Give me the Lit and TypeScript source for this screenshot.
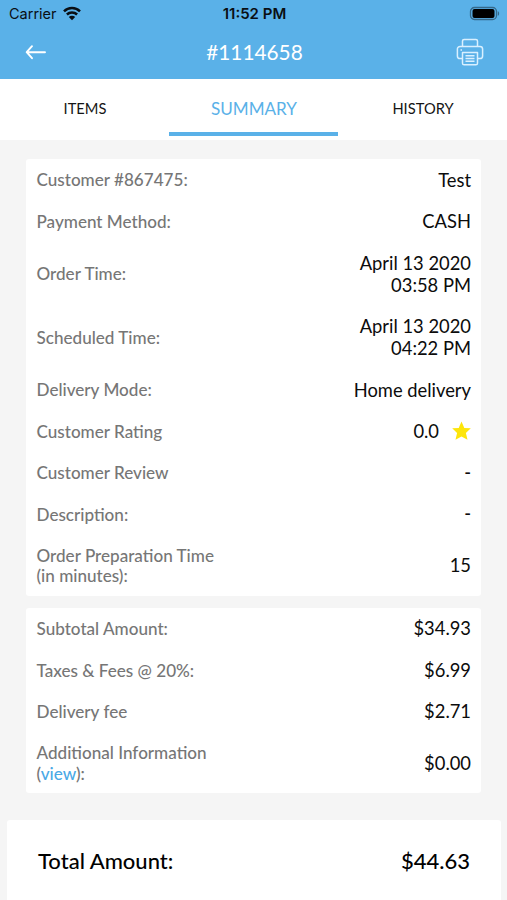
import { LitElement, html, css, svg } from "lit";
import { customElement } from "lit/decorators.js";

interface Row {
  label: unknown;
  value: unknown;
}

const star = html`<svg class="star" viewBox="0 0 20 20">
  <path d="M10.500 0.500L13.300 6.900L19.800 7.200L14.900 11.900L16.500 18.700L10.500 15.400L4.500 18.700L6.100 11.900L1.200 7.200L7.700 6.900Z" fill="#fde50b" />
</svg>`;

const details: Row[] = [
  { label: "Customer #867475:", value: "Test" },
  { label: "Payment Method:", value: "CASH" },
  { label: "Order Time:", value: html`April 13 2020<br />03:58 PM` },
  { label: "Scheduled Time:", value: html`April 13 2020<br />04:22 PM` },
  { label: "Delivery Mode:", value: "Home delivery" },
  { label: "Customer Rating", value: html`<span class="rating">0.0 ${star}</span>` },
  { label: "Customer Review", value: html`<span class="dash">-</span>` },
  { label: "Description:", value: html`<span class="dash">-</span>` },
  { label: html`Order Preparation Time<br />(in minutes):`, value: "15" },
];

const amounts: Row[] = [
  { label: "Subtotal Amount:", value: "$34.93" },
  { label: "Taxes & Fees @ 20%:", value: "$6.99" },
  { label: "Delivery fee", value: "$2.71" },
  {
    label: html`Additional Information<br />(<span class="link">view</span>):`,
    value: "$0.00",
  },
];

const wifiArcs = svg`
  <path d="M1 5.300a11.400 11.400 0 0 1 16 0M3.900 8.500a7.300 7.300 0 0 1 10.200 0" fill="none" stroke="#0a0f14" stroke-width="2.500" />
  <path d="M9 14.200L5.800 11a4.500 4.500 0 0 1 6.400 0z" fill="#0a0f14" />`;

@customElement("app-root")
export class AppRoot extends LitElement {
  static styles = css`
    :host {
      display: flex;
      flex-direction: column;
      height: 900px;
      overflow: hidden;
      background: #f5f5f5;
      font-family: Lato, "Liberation Sans", sans-serif;
      color: #151515;
    }
    .top {
      height: 79px;
      flex: none;
      background: #5ab1e8;
    }
    .status {
      display: grid;
      grid-template-columns: 1fr auto 1fr;
      align-items: center;
      height: 27px;
      padding: 0 7px 0 9px;
      font: 400 14.5px/27px Inter, sans-serif;
      color: #0a0f14;
    }
    .carrier {
      display: flex;
      align-items: center;
      gap: 6px;
    }
    .wifi {
      width: 18px;
      height: 15px;
      margin-bottom: 1px;
    }
    .clock {
      font-size: 15px;
      font-weight: 600;
    }
    .battery {
      justify-self: end;
      width: 31px;
      height: 15px;
      margin-bottom: 1px;
    }
    .nav {
      display: grid;
      grid-template-columns: 1fr auto 1fr;
      align-items: center;
      height: 50px;
      padding: 0 23px 0 25px;
      color: #fff;
    }
    .title {
      font-size: 20.8px;
      padding-bottom: 2px;
    }
    .back {
      width: 22px;
      height: 16px;
    }
    .printer {
      justify-self: end;
      width: 28px;
      height: 28px;
    }
    .tabs {
      flex: none;
      display: grid;
      grid-template-columns: repeat(3, 1fr);
      height: 61px;
      background: #fff;
      font-size: 14.7px;
    }
    .tab {
      display: flex;
      align-items: center;
      justify-content: center;
      height: 57px;
      box-sizing: border-box;
      padding: 0 0 0 1px;
    }
    .active {
      color: #5ab1e8;
      font-size: 17.1px;
      border-bottom: 4px solid #5ab1e8;
      padding-top: 6px;
    }
    .card {
      flex: none;
      margin: 0 26px;
      padding: 0 10px 0 10.5px;
      background: #fff;
      border-radius: 3px;
    }
    .details {
      margin-top: 19px;
    }
    .amounts {
      margin-top: 12px;
    }
    .row {
      display: flex;
      align-items: center;
      justify-content: space-between;
      padding: 9.75px 0;
    }
    .label {
      margin: 1px 0 -1px;
      color: #767676;
      font-size: 17.1px;
      font-weight: 500;
      line-height: 20.6px;
    }
    .value {
      font-size: 18.35px;
      line-height: 22px;
      text-align: right;
      color: #0c0c0c;
    }
    .dash {
      display: block;
      margin: -1px 0 1px;
      font-weight: 500;
    }
    .link {
      color: #4aa9e6;
    }
    .rating {
      display: flex;
      align-items: center;
      gap: 12px;
    }
    .star {
      width: 20px;
      height: 20px;
    }
    .total {
      flex: 1;
      display: flex;
      align-items: flex-start;
      justify-content: space-between;
      margin: 27px 6px 0 7px;
      padding: 27px 31px 0;
      background: #fff;
      border-radius: 3px 3px 0 0;
      font-size: 22px;
      line-height: 27px;
      font-weight: 500;
      color: #000;
    }
  `;

  private rows(list: Row[]) {
    return list.map(
      (r) => html`<div class="row">
        <div class="label">${r.label}</div>
        <div class="value">${r.value}</div>
      </div>`
    );
  }

  render() {
    return html`
      <header class="top">
        <div class="status">
          <div class="carrier">
            <span>Carrier</span>
            <svg class="wifi" viewBox="0 0 18 15">${wifiArcs}</svg>
          </div>
          <div class="clock">11:52 PM</div>
          <svg class="battery" viewBox="0 0 31 15">
            <rect x="1.500" y="1.500" width="26" height="12" rx="4" fill="none" stroke="#35698a" stroke-width="1.3" />
            <rect x="3.500" y="3" width="22" height="9" rx="2" fill="#000" />
            <path d="M28.800 5.200c1.800.7 1.800 3.900 0 4.600z" fill="#35698a" />
          </svg>
        </div>
        <div class="nav">
          <svg class="back" viewBox="0 0 22 16">
            <path d="M7 2.200L1.700 8.200L7 14.200M1.700 8.200H20" fill="none" stroke="#fff" stroke-width="1.9" stroke-linecap="round" stroke-linejoin="round" />
          </svg>
          <div class="title">#1114658</div>
          <svg class="printer" viewBox="0 0 28 28" fill="none" stroke="#d9f0ff" stroke-width="1.5" stroke-linejoin="round">
            <path d="M6.500 8.500V3a1.600 1.600 0 0 1 1.600-1.600H19.900A1.600 1.600 0 0 1 21.500 3V8.500" />
            <path d="M6.500 20.500H4a2.600 2.600 0 0 1-2.600-2.600V11A2.600 2.600 0 0 1 4 8.400H24A2.600 2.600 0 0 1 26.600 11v6.900A2.600 2.600 0 0 1 24 20.500H21.500" />
            <path d="M6.500 14.500H21.500V25.200a1.600 1.600 0 0 1-1.600 1.600H8.100A1.600 1.600 0 0 1 6.500 25.200Z" />
            <path d="M9.500 17.700H18.500M9.500 20.500H18.500M9.500 23.300H18.500M4.500 12H6" />
          </svg>
        </div>
      </header>
      <nav class="tabs">
        <div class="tab">ITEMS</div>
        <div class="tab active">SUMMARY</div>
        <div class="tab">HISTORY</div>
      </nav>
      <section class="card details">${this.rows(details)}</section>
      <section class="card amounts">${this.rows(amounts)}</section>
      <section class="total">
        <span>Total Amount:</span>
        <span>$44.63</span>
      </section>
    `;
  }
}
